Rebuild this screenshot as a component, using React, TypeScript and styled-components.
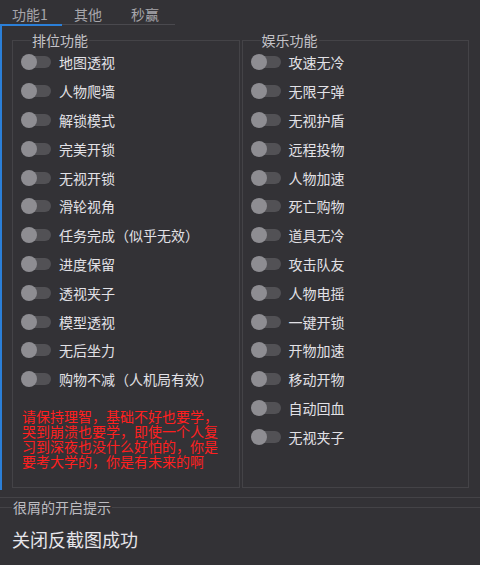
import React from 'react';
import styled, { createGlobalStyle } from 'styled-components';

const GlobalStyle = createGlobalStyle`
  html, body {
    margin: 0;
    padding: 0;
    background: #333236;
  }
  body {
    font-family: "Noto Sans CJK SC", "Noto Sans", sans-serif;
  }
`

const Window = styled.div`
  width: 480px;
  height: 565px;
  background: #333236;
  overflow: hidden;
  display: flex;
  flex-direction: column;
`
const TabBar = styled.div`
  display: flex;
  align-items: flex-start;
  height: 26px;
`
const Tab = styled.div<{ $active?: boolean; $width: number }>`
  box-sizing: border-box;
  width: ${p => p.$width}px;
  height: ${p => (p.$active ? 26 : 25)}px;
  padding: 5px 0 0 12px;
  font-size: 14px;
  line-height: 19px;
  color: #a7a6ab;
  border-bottom: ${p => (p.$active ? '2px solid #2b7fd8' : '1px solid #4a494e')};
`
const Pane = styled.div`
  box-sizing: border-box;
  height: 464px;
  border-left: 2px solid #2b7fd8;
  padding: 6px 11px 2px 10px;
  display: flex;
  gap: 2px;
`
const Group = styled.fieldset`
  flex: 1;
  margin: 0;
  padding: 0 0 0 8px;
  border: 1px solid #444347;
  min-width: 0;
`
const Legend = styled.legend`
  margin-left: 10px;
  padding: 0 1px;
  font-size: 14px;
  line-height: 16px;
  color: #c4c3c8;
`
const Row = styled.div`
  display: flex;
  align-items: center;
  height: 28.8px;
`
const Switch = styled.span`
  position: relative;
  display: inline-flex;
  align-items: center;
  width: 30px;
  height: 16px;
  margin-right: 8px;
  flex-shrink: 0;
  &::before {
    content: '';
    position: absolute;
    left: 6px;
    right: 0;
    top: 2px;
    height: 12px;
    border-radius: 6px;
    background: #525155;
  }
`
const Knob = styled.span`
  position: relative;
  width: 16px;
  height: 16px;
  border-radius: 50%;
  background: #8e8d92;
`
const Label = styled.span`
  font-size: 14px;
  line-height: 18px;
  color: #e2e1e6;
  white-space: nowrap;
`
const Warning = styled.p`
  width: 200px;
  margin: 15px 0 0 1px;
  font-size: 14px;
  line-height: 15px;
  color: #ff1f1f;
`
const Divider = styled.div`
  height: 1px;
  margin-top: 7px;
  background: #444347;
`
const Hint = styled.fieldset`
  margin: 1px 0 0 0;
  padding: 12px 0 0 12px;
  border: none;
  border-top: 1px solid #444347;
`
const HintLegend = styled.legend`
  margin-left: 0;
  padding: 0 1px;
  font-size: 14px;
  line-height: 16px;
  color: #bdbcc1;
`
const HintText = styled.div`
  font-size: 18px;
  line-height: 24px;
  color: #e6e5ea;
`

const rankItems = [
  '地图透视', '人物爬墙', '解锁模式', '完美开锁', '无视开锁', '滑轮视角',
  '任务完成（似乎无效）', '进度保留', '透视夹子', '模型透视', '无后坐力', '购物不减（人机局有效）',
]
const funItems = [
  '攻速无冷', '无限子弹', '无视护盾', '远程投物', '人物加速', '死亡购物', '道具无冷',
  '攻击队友', '人物电摇', '一键开锁', '开物加速', '移动开物', '自动回血', '无视夹子',
]

const Toggle: React.FC<{ label: string }> = ({ label }) => (
  <Row>
    <Switch><Knob /></Switch>
    <Label>{label}</Label>
  </Row>
)

const App: React.FC = () => {
  return (
    <Window>
      <GlobalStyle />
      <TabBar>
        <Tab $active $width={62}>功能1</Tab>
        <Tab $width={57}>其他</Tab>
        <Tab $width={56}>秒赢</Tab>
      </TabBar>
      <Pane>
        <Group>
          <Legend>排位功能</Legend>
          {rankItems.map(item => <Toggle key={item} label={item} />)}
          <Warning>
            请保持理智，基础不好也要学，哭到崩溃也要学，即使一个人复习到深夜也没什么好怕的，你是要考大学的，你是有未来的啊
          </Warning>
        </Group>
        <Group>
          <Legend>娱乐功能</Legend>
          {funItems.map(item => <Toggle key={item} label={item} />)}
        </Group>
      </Pane>
      <Divider />
      <Hint>
        <HintLegend>很屑的开启提示</HintLegend>
        <HintText>关闭反截图成功</HintText>
      </Hint>
    </Window>
  );
}

export default App;
